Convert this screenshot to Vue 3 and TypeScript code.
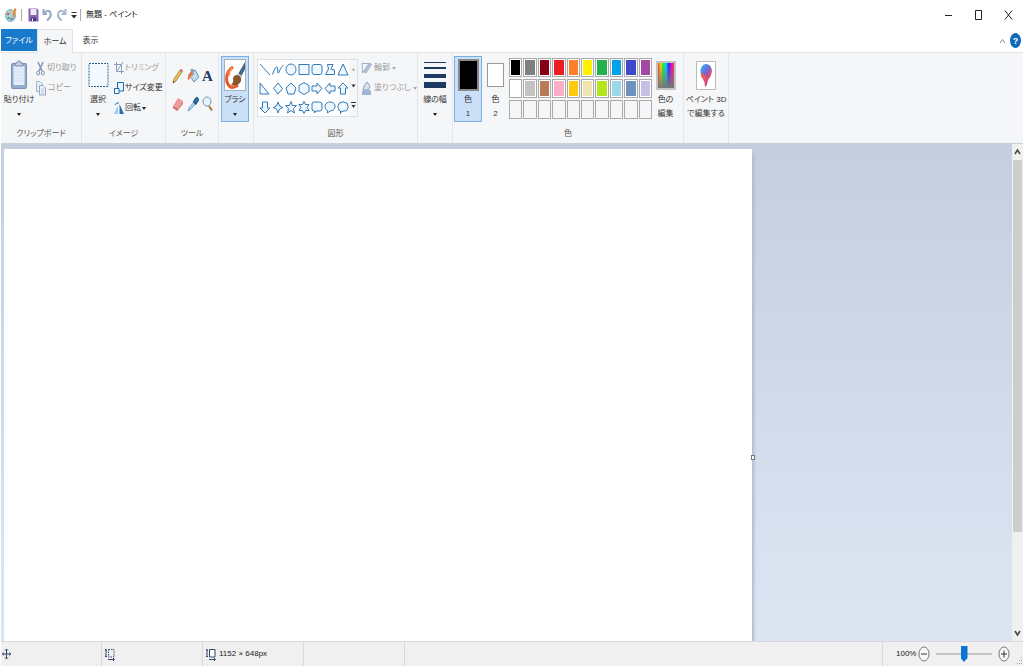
<script setup lang="ts">
import { ref } from 'vue'

interface Shape { name: string; d: string }

const shapes: Shape[] = [
  { name: '直線', d: 'M1 1L11 12' },
  { name: '曲線', d: 'M.5 11.5C2 7 4 3 5 4C6.500 5 5 11 6.500 10C8 8 9 3 11.500 2.500' },
  { name: '楕円', d: 'M6 1A5 5.5 0 0 1 6 12A5 5.5 0 0 1 6 1Z' },
  { name: '四角形', d: 'M1 1.5H11V11.5H1Z' },
  { name: '角丸四角形', d: 'M3 1.5H9Q11 1.5 11 4V9Q11 11.5 9 11.5H3Q1 11.5 1 9V4Q1 1.5 3 1.5Z' },
  { name: '多角形', d: 'M3.500 1.500H9L7 6L10.500 7V11.500H1.500L4.500 6Z' },
  { name: '三角形', d: 'M6 1L11 12H1Z' },
  { name: '直角三角形', d: 'M1 1V12H10Z' },
  { name: 'ひし形', d: 'M6 1L10.5 6.5L6 12L1.5 6.5Z' },
  { name: '五角形', d: 'M6 1L11 6L9 12H3L1 6Z' },
  { name: '六角形', d: 'M6 0.5L11 3.5V9.5L6 12.5L1 9.5V3.5Z' },
  { name: '右矢印', d: 'M1 4H6V1L11 6.5L6 12V9H1Z' },
  { name: '左矢印', d: 'M11 4H6V1L1 6.5L6 12V9H11Z' },
  { name: '上矢印', d: 'M6 1L11 6H8.5V12H3.5V6H1Z' },
  { name: '下矢印', d: 'M3.5 1H8.5V7H11L6 12L1 7H3.5Z' },
  { name: '四方星', d: 'M6 1L7.5 5L11 6.5L7.5 8L6 12L4.5 8L1 6.5L4.5 5Z' },
  { name: '五方星', d: 'M6 .5L7.5 4.5H11.5L8.5 7.5L9.5 12L6 9.5L2.5 12L3.5 7.5L.5 4.5H4.5Z' },
  { name: '六方星', d: 'M6 .5L7.5 3.5H11L9 6.5L11 9.5H7.5L6 12.5L4.5 9.5H1L3 6.5L1 3.5H4.5Z' },
  { name: '角丸吹き出し', d: 'M3 1H9Q11 1 11 3V8Q11 10 9 10H5L3.5 12V10H3Q1 10 1 8V3Q1 1 3 1Z' },
  { name: '楕円吹き出し', d: 'M6 1C13 1 12.5 10 6 10L3.5 12L3.5 9.5C-1 7 1 1 6 1Z' },
  { name: '雲形吹き出し', d: 'M4 1.5Q6 0 8 1.5Q11 1.5 10.5 4Q12 6 10.5 8Q10 10.5 7.5 10L4.5 10.5L3.5 12.5L3.5 10Q1 9.5 1.5 7.5Q0 5.5 1.5 4Q1.5 1.5 4 1.5Z' },
]

const palette: string[] = [
  '#000000', '#7f7f7f', '#880015', '#ed1c24', '#ff7f27', '#fff200', '#22b14c', '#00a2e8', '#3f48cc', '#a349a4',
  '#ffffff', '#c3c3c3', '#b97a57', '#ffaec9', '#ffc90e', '#efe4b0', '#b5e61d', '#99d9ea', '#7092be', '#c8bfe7',
  ...Array<string>(10).fill('#f5f6f7'),
]

const color1 = ref('#000000')
const zoom = ref(50)
</script>

<template>
  <div class="window" lang="ja">
    <header class="titlebar">
      <svg class="app-icon" width="12" height="16" viewBox="0 0 12 16">
        <ellipse cx="5.5" cy="8.5" rx="5" ry="6" fill="#a9d3ea" stroke="#6eaed1" />
        <circle cx="3" cy="7" r="1.3" fill="#e2574c" /><circle cx="5.5" cy="5" r="1.2" fill="#f3c13a" />
        <circle cx="3.5" cy="11" r="1.2" fill="#55a84f" /><circle cx="6.5" cy="12" r="1.2" fill="#4d7fc9" />
        <path d="M9.5 1L11.500 2L9.5 9L8 13L7.500 8Z" fill="#e98b2d" />
      </svg>
      <i class="bar"></i>
      <button class="quick" aria-label="保存">
        <svg width="11" height="14" viewBox="0 0 11 14"><path d="M.5 .5H9L10.5 2V13.5H.5Z" fill="#8464b4" /><path d="M2.500 1H8.500V7H2.500Z" fill="#eee9f7" /><path d="M3 9.500H8V13H3Z" fill="#51357d" /><path d="M4 10.500H5V13H4Z" fill="#fff" /></svg>
      </button>
      <button class="quick" aria-label="元に戻す">
        <svg width="11" height="14" viewBox="0 0 11 14"><path d="M1.500 1V6H5M2 5.500Q5 1 8 4Q10.500 8 5 12.500" fill="none" stroke="#93a7c8" stroke-width="2" /></svg>
      </button>
      <button class="quick" aria-label="やり直し">
        <svg width="11" height="14" viewBox="0 0 11 14"><path d="M9.500 1V6H5.500M9 5.500Q6 1 3 4Q0 8 5.500 12.500" fill="none" stroke="#a8b7cf" stroke-width="2" /></svg>
      </button>
      <button class="quick more" aria-label="クイック アクセス">
        <svg width="6" height="8" viewBox="0 0 6 8"><path d="M.5 1.500H5.500" stroke="#333" /><path d="M0 4H6L3 7.500Z" fill="#333" /></svg>
      </button>
      <i class="bar"></i>
      <h1>無題 - ペイント</h1>
      <div class="controls">
        <button aria-label="最小化"><svg width="9" height="12" viewBox="0 0 9 12"><path d="M1 6.500H8" stroke="#222" /></svg></button>
        <button aria-label="最大化"><svg width="9" height="12" viewBox="0 0 9 12"><path d="M1.500 1.500H7.500V10.500H1.500Z" fill="none" stroke="#222" /></svg></button>
        <button aria-label="閉じる"><svg width="9" height="12" viewBox="0 0 9 12"><path d="M1 1.500L8 10.500M8 1.500L1 10.500" stroke="#222" /></svg></button>
      </div>
    </header>

    <nav class="tabs">
      <button class="tab file">ファイル</button>
      <button class="tab home">ホーム</button>
      <button class="tab view">表示</button>
      <span class="grow"></span>
      <button class="collapse" aria-label="リボンの最小化"><svg width="7" height="6" viewBox="0 0 7 6"><path d="M1 5L3.500 1.500L6 5" fill="none" stroke="#888" /></svg></button>
      <button class="help" aria-label="ヘルプ">?</button>
    </nav>

    <main class="ribbon">
      <section class="group clipboard">
        <div class="body">
          <button class="big">
            <span class="pic"><svg width="18" height="30" viewBox="0 0 18 30"><rect x="1.500" y="3.500" width="15" height="25" rx="1" fill="#94abd0" stroke="#7891ba" /><path d="M3.500 6H14.500V25H3.500Z" fill="#e5edf8" /><path d="M4 9H14M4 12H14M4 15H14M4 18H14M4 21H14" stroke="#d3e0f1" /><path d="M5 3H7Q7 1 9 1T11 3H13V6H5Z" fill="#c1cce0" stroke="#7a8cac" /></svg></span>
            <span>貼り付け</span><i class="caret"></i>
          </button>
          <div class="stack">
            <button class="small off"><svg width="9" height="15" viewBox="0 0 9 15"><path d="M2 1L6 10M7 1L3 10" stroke="#8295b5" stroke-width="1.500" /><ellipse cx="2.200" cy="12" rx="1.500" ry="2" fill="none" stroke="#8295b5" /><ellipse cx="6.800" cy="12" rx="1.500" ry="2" fill="none" stroke="#8295b5" /></svg>切り取り</button>
            <button class="small off"><svg width="10" height="16" viewBox="0 0 10 16"><path d="M.5 1.500H4L6.500 4V11.500H.5Z" fill="#e9eff8" stroke="#a4b3cd" /><path d="M3.500 5.500H7L9.500 8V15H3.500Z" fill="#edf2fa" stroke="#95a7c5" /><path d="M5 9H8M5 11H8M5 13H8" stroke="#bbc8de" /></svg>コピー</button>
          </div>
        </div>
        <h2>クリップボード</h2>
      </section>

      <section class="group image">
        <div class="body">
          <button class="big">
            <span class="pic"><svg width="21" height="26" viewBox="0 0 21 26"><rect x="1" y="1.500" width="19" height="23" fill="#f4f9ff" stroke="#2c6597" stroke-dasharray="2 1" /></svg></span>
            <span>選択</span><i class="caret"></i>
          </button>
          <div class="stack">
            <button class="small off"><svg width="10" height="14" viewBox="0 0 10 14"><path d="M2.500 1V10.500H10M0 3.500H7.500V13M3 10L9 1" fill="none" stroke="#8d9fbd" /></svg>トリミング</button>
            <button class="small"><svg width="10" height="14" viewBox="0 0 10 14"><path d="M3.500 1.500H9.500V10H3.500Z" fill="#e6f3ff" stroke="#1d6cae" /><path d="M.5 7.500H5V12.500H.5Z" fill="#fff" stroke="#1d6cae" /></svg>サイズ変更</button>
            <button class="small"><svg width="10" height="14" viewBox="0 0 10 14"><path d="M4 4V13H0Z" fill="#a4c9e6" /><path d="M5.500 3V13H10Z" fill="#1d72b8" /><path d="M1 4Q2 1 5 2" fill="none" stroke="#1d72b8" /></svg>回転<i class="caret"></i></button>
          </div>
        </div>
        <h2>イメージ</h2>
      </section>

      <section class="group tools">
        <div class="body">
          <div class="toolgrid">
            <button aria-label="鉛筆"><svg width="11" height="16" viewBox="0 0 11 16"><path d="M1 15L2 11L8 2L10 4L4 13Z" fill="#f0c44c" stroke="#866c36" stroke-width=".7" /><path d="M8 2L9 .8L11 3L10 4Z" fill="#cf5d5d" /><path d="M1 15L1.500 13L2.500 14Z" fill="#222" /></svg></button>
            <button aria-label="塗りつぶし"><svg width="12" height="16" viewBox="0 0 12 16"><path d="M4 4L8 2L12 9L7 14L3 8Z" fill="#c4dcf0" stroke="#6a8baa" /><path d="M5 8L4 1.500H6V7" fill="none" stroke="#7b8794" /><path d="M5 4Q0 5 1 12Q3 12 3 8L6 6Z" fill="#ef6e32" /></svg></button>
            <button class="letter" aria-label="テキスト">A</button>
            <button aria-label="消しゴム"><svg width="12" height="16" viewBox="0 0 12 16"><path d="M1 10L6 2L11 5L6 13Z" fill="#ef9999" /><path d="M1 10L6 13L5.500 15L1 12Z" fill="#cf5d62" /><path d="M6 13L11 5V8L5.500 15Z" fill="#df777b" /></svg></button>
            <button aria-label="色の選択"><svg width="12" height="16" viewBox="0 0 12 16"><path d="M1 15L2 12L7 6L8.500 8L3 14Z" fill="#b4d8ef" stroke="#4f85b2" stroke-width=".7" /><path d="M6 5L9 9M7 5Q9 0 11 2T9 8Z" stroke="#174e83" fill="#286fae" /></svg></button>
            <button aria-label="拡大鏡"><svg width="12" height="16" viewBox="0 0 12 16"><ellipse cx="5" cy="5.500" rx="4" ry="4.500" fill="#e3f3ff" stroke="#7c91a9" /><path d="M7 10L10 14.500" stroke="#a97439" stroke-width="2" /></svg></button>
          </div>
        </div>
        <h2>ツール</h2>
      </section>

      <section class="group brush">
        <div class="body">
          <button class="big active">
            <span class="pic"><svg width="22" height="32" viewBox="0 0 22 32"><path d="M.5 .5H21.500V31.500H.5Z" fill="#fff" stroke="#a4b1bf" /><path d="M9 8Q1 13 3 23Q6 32 14 26" fill="none" stroke="#e75c2c" stroke-width="3" /><path d="M8 9Q5 12 5 17" fill="none" stroke="#f69561" stroke-width="2" /><path d="M21 3V10L17 18L14 15Z" fill="#426886" /><path d="M14 14L18 17L16 20L12 17Z" fill="#c4ccd2" /><path d="M12 16Q18 16 17 22Q14 28 7 26Q10 23 9 20Q9 17 12 16Z" fill="#8b552d" /></svg></span>
            <span>ブラシ</span><i class="caret"></i>
          </button>
        </div>
      </section>

      <section class="group shapes">
        <div class="body">
          <div class="gallery">
            <div class="shapegrid">
              <button v-for="s in shapes" :key="s.name" :aria-label="s.name">
                <svg width="12" height="13" viewBox="0 0 12 13"><path :d="s.d" /></svg>
              </button>
            </div>
            <div class="scroller">
              <button aria-label="上へ"><svg width="5" height="4" viewBox="0 0 5 4"><path d="M.5 3.500H4.500L2.500 1Z" fill="#aaa" /></svg></button>
              <button aria-label="下へ"><svg width="5" height="4" viewBox="0 0 5 4"><path d="M.5 .5H4.500L2.500 3.500Z" fill="#333" /></svg></button>
              <button aria-label="その他"><svg width="5" height="7" viewBox="0 0 5 7"><path d="M0 .5H5" stroke="#333" /><path d="M.5 3H4.500L2.500 6Z" fill="#333" /></svg></button>
            </div>
          </div>
          <div class="stack">
            <button class="small off"><svg width="11" height="14" viewBox="0 0 11 14"><path d="M1 2.500H8L1.500 12Z" fill="#eef3fb" stroke="#a0b0cc" /><path d="M3 11L9 2L10.500 3.500L5 12Z" fill="#b8c6dd" stroke="#8c9fbf" stroke-width=".7" /></svg>輪郭<i class="caret"></i></button>
            <button class="small off"><svg width="11" height="15" viewBox="0 0 11 15"><path d="M3 5L6 1L9 5L7 10L2 9Z" fill="#d8e2f0" stroke="#8ea3c5" /><path d="M1 10Q5 6 10 10V14H1Z" fill="#9fb5d6" /></svg>塗りつぶし<i class="caret"></i></button>
          </div>
        </div>
        <h2>図形</h2>
      </section>

      <section class="group stroke">
        <div class="body">
          <button class="big">
            <span class="pic"><svg width="22" height="28" viewBox="0 0 22 28" fill="#1e3a63"><path d="M0 1H22V2H0ZM0 6H22V8H0ZM0 13H22V17H0ZM0 21H22V27H0Z" /></svg></span>
            <span>線の幅</span><i class="caret"></i>
          </button>
        </div>
      </section>

      <section class="group colors">
        <div class="body">
          <button class="big active"><span class="pic"><span class="swatch first" :style="{ background: color1 }"></span></span><span>色</span><span>1</span></button>
          <button class="big second"><span class="pic"><span class="swatch"></span></span><span>色</span><span>2</span></button>
          <div class="palette">
            <button v-for="(c, i) in palette" :key="i" :class="{ empty: i > 19 }" :aria-label="'色 ' + c" @click="color1 = c"><i :style="{ background: c }"></i></button>
          </div>
          <button class="big edit"><span class="pic"><span class="rainbow"></span></span><span>色の</span><span>編集</span></button>
        </div>
        <h2>色</h2>
      </section>

      <section class="group paint3d">
        <div class="body">
          <button class="big">
            <span class="pic"><svg width="20" height="29" viewBox="0 0 20 29"><defs><linearGradient id="drop" x1="0" y1="0" x2=".7" y2="1"><stop offset="0" stop-color="#24c1ee" /><stop offset=".45" stop-color="#6a69db" /><stop offset=".7" stop-color="#e54879" /><stop offset="1" stop-color="#8b43bd" /></linearGradient></defs><path d="M.5 .5H19.500V28.500H.5Z" fill="#fff" stroke="#bbb" /><path d="M10 3Q15 3 16 10Q15 16 12 19Q11 25 9 26Q9 21 7 18Q4 14 4.500 9Q6 3 10 3Z" fill="url(#drop)" /><path d="M5 12Q9 12 10 17L9 24Q9 20 7 18Q5 15 5 12Z" fill="#f05b50" /></svg></span>
            <span>ペイント 3D</span><span>で編集する</span>
          </button>
        </div>
      </section>
    </main>

    <div class="workspace">
      <div class="viewport">
        <div class="sheet"><i class="handle"></i></div>
      </div>
      <div class="scrollbar">
        <button aria-label="上にスクロール"><svg width="7" height="8" viewBox="0 0 7 8"><path d="M1 6L3.500 2L6 6" fill="none" stroke="#444" stroke-width="1.500" /></svg></button>
        <div class="rail"><div class="thumb"></div></div>
        <button aria-label="下にスクロール"><svg width="7" height="8" viewBox="0 0 7 8"><path d="M1 2L3.500 6L6 2" fill="none" stroke="#444" stroke-width="1.500" /></svg></button>
      </div>
    </div>

    <footer class="status">
      <div class="cell first-cell"><svg width="9" height="12" viewBox="0 0 9 12"><path d="M4.500 1V11M0 6H9M3 2.500L4.500 1L6 2.500M3 9.500L4.500 11L6 9.500M1.500 4.500L.5 6L1.500 7.500M7.500 4.500L8.500 6L7.500 7.500" fill="none" stroke="#34466b" /></svg></div>
      <div class="cell"><svg width="10" height="13" viewBox="0 0 10 13"><path d="M3.500 1.500H9V9H3.500Z" fill="none" stroke="#34466b" stroke-dasharray="1.500 1" /><path d="M1 1V9M0 2H2M0 8.500H2M3 11.500H9M8 10L9.500 11.500L8 13" fill="none" stroke="#34466b" /></svg></div>
      <div class="cell"><svg width="10" height="13" viewBox="0 0 10 13"><path d="M3.500 1.500H9V9H3.500Z" fill="#fff" stroke="#34466b" /><path d="M1 1V9M0 2H2M0 8.500H2M3 11.500H9M8 10L9.500 11.500L8 13" fill="none" stroke="#34466b" /></svg><span>1152 × 648px</span></div>
      <div class="cell"></div>
      <span class="grow"></span>
      <div class="zoom">
        <label for="zoom">100%</label>
        <button aria-label="縮小"><svg width="12" height="16" viewBox="0 0 12 16"><ellipse cx="6" cy="8" rx="5" ry="7" fill="#f7f7f7" stroke="#777" /><path d="M3 8H9" stroke="#333" /></svg></button>
        <input id="zoom" v-model="zoom" type="range" min="0" max="100" />
        <button aria-label="拡大"><svg width="12" height="16" viewBox="0 0 12 16"><ellipse cx="6" cy="8" rx="5" ry="7" fill="#f7f7f7" stroke="#777" /><path d="M3 8H9M6 4.500V11.500" stroke="#333" /></svg></button>
        <svg class="grip" width="7" height="9" viewBox="0 0 7 9"><path d="M5 0H6V1H5ZM5 3H6V4H5ZM3 3H4V4H3ZM5 6H6V7H5ZM3 6H4V7H3ZM1 6H2V7H1Z" fill="#aaa" /></svg>
      </div>
    </footer>
  </div>
</template>

<style>
html, body { margin: 0; background: #fff; }
</style>

<style scoped>
* { box-sizing: border-box; }
.window { display: flex; flex-direction: column; height: 100vh; padding: 0 1px 1px; overflow: hidden; background: #fff; color: #333; font: 8px/14px "Liberation Sans", "Noto Sans CJK JP", sans-serif; font-feature-settings: "palt"; }
button { display: flex; align-items: center; justify-content: center; margin: 0; padding: 0; border: 0; background: none; color: inherit; font: inherit; font-feature-settings: inherit; white-space: nowrap; }
svg { display: block; flex: none; }
h1, h2 { margin: 0; font-size: inherit; font-weight: 400; }
.grow { flex: 1; }
.caret { width: 0; height: 0; border: 2px solid transparent; border-top: 3px solid #222; border-bottom: 0; }

.titlebar { display: flex; flex: none; align-items: center; height: 29px; padding-left: 4px; }
.bar { width: 1px; height: 12px; background: #aaa; }
.app-icon { margin-right: 4px; }
.quick { width: 14px; height: 20px; }
.bar + .quick { margin-left: 4px; }
.more { width: 11px; margin-right: 1px; }
h1 { margin-left: 5px; color: #111; }
.controls { display: flex; margin-left: auto; }
.controls button { width: 30px; height: 29px; }

.tabs { display: flex; flex: none; height: 23px; }
.tab { height: 23px; border: 1px solid transparent; border-bottom: 0; }
.file { width: 36px; height: 22px; background: #1979ca; color: #fff; }
.home { width: 36px; height: 24px; border-color: #dfe1e4; background: #f5f6f7; z-index: 1; }
.view { width: 35px; }
.collapse { width: 16px; }
.help { flex: none; align-self: center; width: 11px; height: 15px; margin-right: 2px; border-radius: 50%; background: #1069b8; color: #fff; font-weight: 700; font-size: 9px; }

.ribbon { display: flex; flex: none; height: 92px; border-top: 1px solid #e1e3e6; border-bottom: 1px solid #c9d0da; background: #f5f6f7; }
.group { display: flex; flex: none; flex-direction: column; justify-content: space-between; padding: 3px 2px 2px; border-right: 1px solid #e4e6e9; }
.group h2 { text-align: center; color: #555; }
.body { display: flex; height: 66px; }
.big { flex: none; flex-direction: column; justify-content: flex-start; width: 28px; height: 66px; border: 1px solid transparent; }
.big > span { height: 14px; }
.big > .pic { display: flex; align-items: center; height: 36px; }
.big > .caret { margin-top: 6px; }
.active { border-color: #78b0e6; background: #cae0f7; }
.stack { display: flex; flex-direction: column; align-items: flex-start; padding-top: 2px; }
.small { gap: 2px; height: 20px; }
.off { color: #999; }
.off .caret { border-top-color: #aaa; }
.clipboard { width: 81px; }
.clipboard .big { width: 32px; }
.clipboard .stack { margin-left: 1px; }
.image { width: 84px; }
.image .stack { margin-left: 2px; }
.image .small { gap: 1px; }
.tools { width: 53px; }
.toolgrid { display: grid; grid-template-columns: repeat(3, 15px); grid-auto-rows: 28px; padding: 6px 0 0 2px; }
.letter { color: #1d3b64; font: 700 15px/16px "Liberation Serif", serif; }
.brush { width: 35px; }
.shapes { width: 164px; }
.gallery { display: flex; width: 101px; height: 58px; margin: 3px 3px 0 1px; border: 1px solid #dcdfe4; background: #fff; }
.shapegrid { display: grid; grid-template-columns: repeat(7, 13px); grid-auto-rows: 19px; flex: 1; }
.shapegrid path { fill: #eff8ff; stroke: #337ab7; stroke-width: 1; }
.scroller { display: grid; width: 8px; background: #f5f6f7; }
.stroke { width: 35px; }
.stroke .big { width: 30px; }
.colors { width: 231px; padding: 3px 1px 2px; }
.second { width: 27px; }
.swatch { width: 17px; height: 24px; border: 1px solid #999; background: #fff; }
.first { width: 21px; height: 32px; border: 2px solid #888; }
.palette { display: grid; grid-template-columns: repeat(10, 1fr); grid-auto-rows: 19px; gap: 2px 1px; width: 143px; height: 61px; margin-top: 2px; }
.palette button { align-items: stretch; justify-content: stretch; padding: 1px; border: 1px solid #aaa; background: #fff; }
.palette i { flex: 1; }
.palette .empty { background: #f5f6f7; }
.edit { width: 27px; }
.rainbow { width: 20px; height: 29px; border: 2px solid #c4c4c4; background: linear-gradient(to bottom, transparent, #777), linear-gradient(to right, #f33, #fd0, #1e4, #0df, #22f, #e0d, #f33); }
.paint3d { width: 45px; }
.paint3d .big { width: 40px; }

.workspace { display: flex; flex: 1; min-height: 0; }
.viewport { flex: 1; overflow: hidden; padding: 5px 0 0 3px; background: linear-gradient(#c4cedf, #dce6f3); }
.sheet { position: relative; width: 748px; height: 612px; background: #fff; box-shadow: 3px 4px 3px -1px #aebbd0; }
.handle { position: absolute; right: -3px; top: 50%; width: 4px; height: 5px; border: 1px solid #777; background: #fff; }
.scrollbar { display: flex; flex-direction: column; width: 11px; background: #f0f0f0; }
.scrollbar button { height: 16px; }
.rail { flex: 1; padding: 0 1px; }
.thumb { height: 80%; background: #cdcdcd; }

.status { display: flex; flex: none; height: 25px; border-top: 1px solid #d9d9d9; background: #f0f0f0; color: #222; }
.cell { display: flex; align-items: center; gap: 3px; width: 101px; padding-left: 3px; border-right: 1px solid #dadada; }
.first-cell { padding-left: 1px; }
.zoom { display: flex; align-items: center; width: 141px; padding-left: 13px; border-left: 1px solid #dadada; }
.zoom label { width: 22px; }
.zoom input { width: 56px; height: 16px; margin: 0 6px; appearance: none; background: linear-gradient(#c4c4c4, #c4c4c4) center / 100% 2px no-repeat; }
.zoom input::-webkit-slider-thumb { appearance: none; width: 7px; height: 16px; background: #0b76d1; clip-path: polygon(0 0, 100% 0, 100% 75%, 50% 100%, 0 75%); }
.grip { align-self: flex-end; margin-left: auto; }
</style>
